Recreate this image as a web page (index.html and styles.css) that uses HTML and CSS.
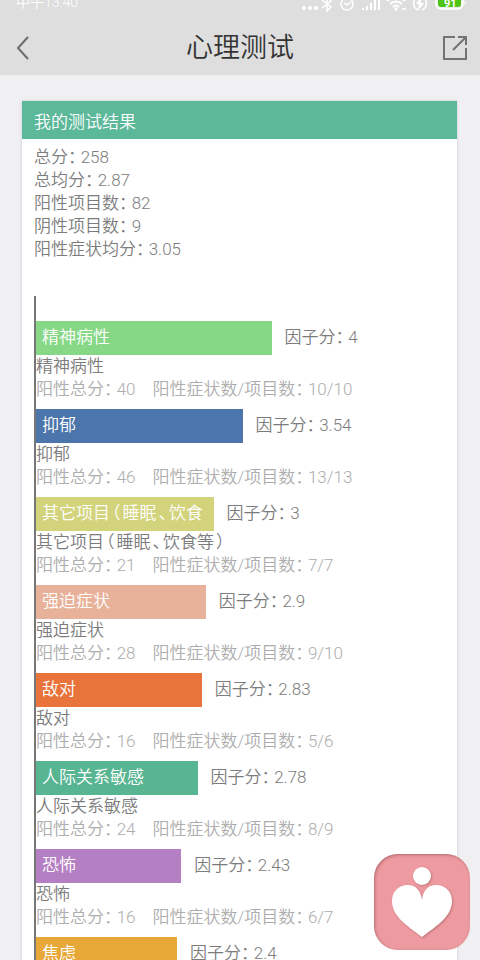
FILE: index.html
```html
<!DOCTYPE html>
<html lang="zh-CN">
<head>
    <meta charset="UTF-8">
    <meta name="viewport" content="width=device-width, initial-scale=1.0">
    <title>心理测试</title>
    <link rel="stylesheet" href="styles.css">
</head>
<body>
    <div class="main">

        <header class="top">
            <div class="status">
                <span class="time">中午13:40</span>
                <svg class="status-icons" width="170" height="14" viewBox="0 0 170 14" fill="none" stroke="#fff" stroke-width="1.5">
                    <!-- dots -->
                    <g fill="#fff" stroke="none">
                        <circle cx="4" cy="8" r="2"/>
                        <circle cx="10" cy="8" r="2"/>
                        <circle cx="16" cy="8" r="2"/>
                    </g>
                    <!-- bluetooth -->
                    <path d="M22 0 L31 7 L27 11 V-3 L31 1 L22 8"/>
                    <!-- alarm -->
                    <circle cx="47" cy="4" r="6"/>
                    <path d="M44 3 L47 5 L51 2"/>
                    <!-- signal -->
                    <path stroke-width="2" d="M63 10 V8 M67 10 V6 M71 10 V3 M75 10 V0 M79 10 V-4"/>
                    <!-- wifi -->
                    <path stroke-width="2" d="M87 1 Q96 -6 105 1 M90 4 Q96 -1 102 4 M93 7 Q96 4 99 7"/>
                    <circle cx="96" cy="9" r="1" fill="#fff"/>
                    <path d="M102 9 H106"/>
                    <!-- charging -->
                    <path d="M118 10 A7 7 0 0 1 118 -3 M122 -3 A7 7 0 0 1 122 10"/>
                    <path fill="#fff" stroke="none" d="M121 -4 L116 4 H119 L118 11 L124 3 H121 Z"/>
                    <!-- battery -->
                    <rect x="136" y="-5" width="27" height="14" rx="5" fill="#eee"/>
                    <rect x="138" y="-4" width="23" height="11" rx="3" fill="#4fc414" stroke="none"/>
                    <path stroke="#eee" d="M165 1 V5"/>
                    <text class="level" x="144" y="7">91</text>
                </svg>
            </div>
            <div class="navbar">
                <button class="back" aria-label="返回">
                    <svg width="26" height="26" viewBox="0 0 26 26" fill="none" stroke="#6b6b6b" stroke-width="2">
                        <path d="M16 2 L6 13 L16 24"/>
                    </svg>
                </button>
                <h1>心理测试</h1>
                <button class="share" aria-label="分享">
                    <svg width="26" height="26" viewBox="0 0 26 26" fill="none" stroke="#737373" stroke-width="2">
                        <path d="M13 2 H2 V24 H24 V13 M16 2 H24 V10 M24 2 L11 15"/>
                    </svg>
                </button>
            </div>
        </header>

        <section class="card">
            <h2>我的测试结果</h2>
            <div class="summary">
                <p>总分： 258</p>
                <p>总均分： 2.87</p>
                <p>阳性项目数： 82</p>
                <p>阴性项目数： 9</p>
                <p>阳性症状均分： 3.05</p>
            </div>

            <div class="chart">
                <div class="factor">
                    <div class="row">
                        <div class="bar green" style="width: 57.6%">精神病性</div>
                        <span class="score">因子分： 4</span>
                    </div>
                    <p>精神病性</p>
                    <p class="detail"><span>阳性总分： 40</span><span>阳性症状数/项目数： 10/10</span></p>
                </div>
                <div class="factor">
                    <div class="row">
                        <div class="bar blue" style="width: 50.5%">抑郁</div>
                        <span class="score">因子分： 3.54</span>
                    </div>
                    <p>抑郁</p>
                    <p class="detail"><span>阳性总分： 46</span><span>阳性症状数/项目数： 13/13</span></p>
                </div>
                <div class="factor">
                    <div class="row">
                        <div class="bar olive" style="width: 43.4%">其它项目<span class="mark">（</span>睡眠<span class="mark">、</span>饮食</div>
                        <span class="score">因子分： 3</span>
                    </div>
                    <p>其它项目<span class="mark">（</span>睡眠<span class="mark">、</span>饮食等<span class="mark">）</span></p>
                    <p class="detail"><span>阳性总分： 21</span><span>阳性症状数/项目数： 7/7</span></p>
                </div>
                <div class="factor">
                    <div class="row">
                        <div class="bar peach" style="width: 41.5%">强迫症状</div>
                        <span class="score">因子分： 2.9</span>
                    </div>
                    <p>强迫症状</p>
                    <p class="detail"><span>阳性总分： 28</span><span>阳性症状数/项目数： 9/10</span></p>
                </div>
                <div class="factor">
                    <div class="row">
                        <div class="bar orange" style="width: 40.5%">敌对</div>
                        <span class="score">因子分： 2.83</span>
                    </div>
                    <p>敌对</p>
                    <p class="detail"><span>阳性总分： 16</span><span>阳性症状数/项目数： 5/6</span></p>
                </div>
                <div class="factor">
                    <div class="row">
                        <div class="bar teal" style="width: 39.5%">人际关系敏感</div>
                        <span class="score">因子分： 2.78</span>
                    </div>
                    <p>人际关系敏感</p>
                    <p class="detail"><span>阳性总分： 24</span><span>阳性症状数/项目数： 8/9</span></p>
                </div>
                <div class="factor">
                    <div class="row">
                        <div class="bar purple" style="width: 35.5%">恐怖</div>
                        <span class="score">因子分： 2.43</span>
                    </div>
                    <p>恐怖</p>
                    <p class="detail"><span>阳性总分： 16</span><span>阳性症状数/项目数： 6/7</span></p>
                </div>
                <div class="factor">
                    <div class="row">
                        <div class="bar yellow" style="width: 34.5%">焦虑</div>
                        <span class="score">因子分： 2.4</span>
                    </div>
                </div>
            </div>
        </section>

        <button class="heart" aria-label="心理">
            <svg width="96" height="96" viewBox="0 0 96 96" fill="#fff">
                <circle cx="48" cy="22" r="9"/>
                <path d="M48 46 C47 37 42 31 34 31 C24 31 18 38 18 47 C18 62 32 71 48 83 C64 71 78 62 78 47 C78 38 72 31 62 31 C54 31 49 37 48 46 Z"/>
            </svg>
        </button>
    </div>
</body>
</html>
```

FILE: styles.css
```css
*{
    box-sizing: border-box;
}
body{
    margin: 0px;
    background-color: #f0f0f2;
    font-family: Roboto, "Noto Sans CJK SC", sans-serif;
    font-size: 17px;
    font-weight: 350;
    line-height: 23px;
    color: #7c7c7c;
}
.main{
    height: 100vh;
    overflow: hidden;
}
h1, h2, p{
    margin: 0px;
    font-weight: 350;
}
button{
    display: flex;
    padding: 0px;
    border: none;
    background: none;
    cursor: pointer;
}

/* status bar and title */
.top{
    background-color: #dedede;
}
.status{
    display: flex;
    justify-content: space-between;
    align-items: flex-end;
    height: 14px;
    padding: 0px 10px 0px 16px;
    overflow: hidden;
    color: white;
}
.time{
    font-size: 14px;
    line-height: 23px;
}
.level{
    font-size: 11px;
    font-weight: bold;
    fill: white;
    stroke: none;
}
.navbar{
    display: flex;
    justify-content: space-between;
    align-items: center;
    height: 61px;
    padding: 6px 12px 0px;
}
.navbar h1{
    font-size: 27px;
    line-height: 36px;
    color: #333;
}

/* result card */
.card{
    margin: 26px 23px 0px 22px;
    background-color: white;
    box-shadow: 0px 0px 3px rgba(0, 0, 0, 0.15);
    font-feature-settings: "halt";
}
.card h2{
    padding: 10px 12px 5px;
    background-color: #5bb899;
    color: white;
    font-size: 17px;
    line-height: 23px;
}
.summary{
    padding: 7px 12px 35px;
}
.chart{
    margin: 0px 12px;
    padding-top: 25px;
    border-left: 2px solid #777;
}
.factor{
    margin-bottom: 8px;
}
.row{
    display: flex;
    gap: 13px;
    line-height: 32px;
}
.bar{
    height: 34px;
    padding: 0px 6px;
    overflow: hidden;
    color: white;
}
.score{
    white-space: nowrap;
}
.mark{
    margin: 0px 2px;
}
.detail{
    display: flex;
    gap: 17px;
    color: #adadad;
}
.green{
    background-color: #86d786;
}
.blue{
    background-color: #4b75ab;
}
.olive{
    background-color: #d2d37b;
}
.peach{
    background-color: #e8b29a;
}
.orange{
    background-color: #e8743c;
}
.teal{
    background-color: #57b592;
}
.purple{
    background-color: #b57fc3;
}
.yellow{
    background-color: #e8a838;
}

/* floating button */
.heart{
    position: fixed;
    right: 10px;
    bottom: 10px;
    border-radius: 24px;
    background-color: #ed9ba0;
    box-shadow: inset 1px 1px 3px rgba(120, 60, 60, 0.5);
}
.heart svg{
    filter: drop-shadow(1px 1px 1px rgba(120, 60, 60, 0.4));
}
```
